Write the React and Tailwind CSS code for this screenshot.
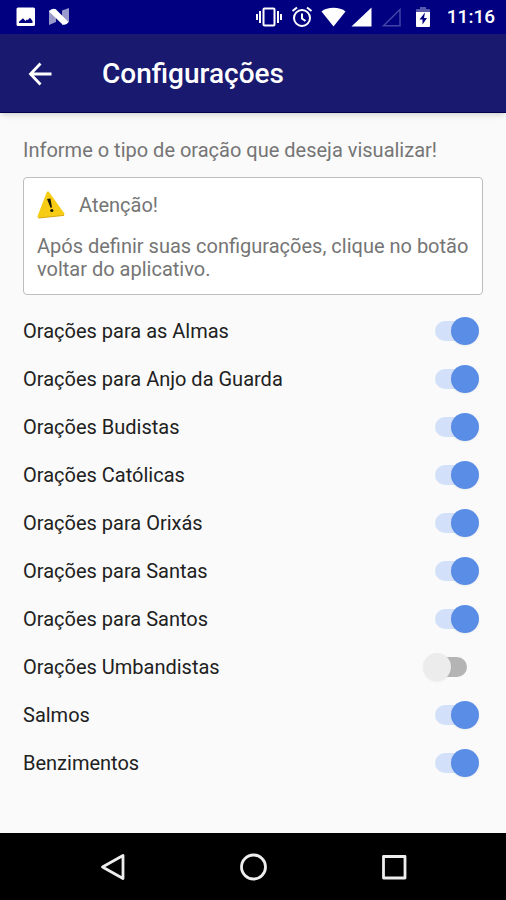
import { useState } from "react";

const prayerTypes = [
  { id: "almas", label: "Orações para as Almas", enabled: true },
  { id: "anjo", label: "Orações para Anjo da Guarda", enabled: true },
  { id: "budistas", label: "Orações Budistas", enabled: true },
  { id: "catolicas", label: "Orações Católicas", enabled: true },
  { id: "orixas", label: "Orações para Orixás", enabled: true },
  { id: "santas", label: "Orações para Santas", enabled: true },
  { id: "santos", label: "Orações para Santos", enabled: true },
  { id: "umbandistas", label: "Orações Umbandistas", enabled: false },
  { id: "salmos", label: "Salmos", enabled: true },
  { id: "benzimentos", label: "Benzimentos", enabled: true },
];

const StatusBar = () => {
  return (
    <div className="flex h-[34px] items-center justify-between bg-[#000080] pr-[11px] pl-4 text-white">
      <div className="flex items-center gap-3">
        <svg className="h-5 w-5" viewBox="0 0 20 20" fill="currentColor">
          <path
            fillRule="evenodd"
            d="M2 .5h15.500a1.500 1.500 0 0 1 1.500 1.500v15.500a1.500 1.500 0 0 1-1.500 1.500H2a1.500 1.500 0 0 1-1.500-1.500V2A1.500 1.500 0 0 1 2 .5zM3 16h13.500v-2L14 10.800l-2.200 2.200-1-.6-1.300 1.600L7 11.200 3 14.800z"
          />
        </svg>
        <svg className="h-5 w-[22px]" viewBox="0 0 22 20" fill="currentColor">
          <path d="M1 3.500l7-1.500v13l-7 3zM14 3.500l7-2.500V15l-7 3z" opacity="0.6" />
          <path d="M1 4.500Q4 .5 8 2.500L20.500 15Q18.500 18.800 14.500 17.500z" />
        </svg>
      </div>
      <div className="flex items-center">
        <svg className="h-5 w-7" viewBox="0 0 28 20" fill="currentColor">
          <rect x="8.500" y="1.500" width="11" height="17" rx="1" fill="none" stroke="currentColor" strokeWidth="2" />
          <path d="M4 4h2v12H4zM1 7h2v6H1zM22 4h2v12h-2zM25 7h2v6h-2z" />
        </svg>
        <svg
          className="ml-2 h-[22px] w-[22px]"
          viewBox="0 0 22 22"
          fill="none"
          stroke="currentColor"
          strokeWidth="2"
        >
          <circle cx="11" cy="12" r="8" />
          <path d="M11 7.500V12.500l3.500 2.500M1.500 5L6 1.500M20.500 5L16 1.500" />
        </svg>
        <svg className="ml-2 h-5 w-[26px]" viewBox="0 0 26 20" fill="currentColor">
          <path d="M12.500 19.500L.5 4.500C6-.5 19-.5 24.500 4.500z" />
        </svg>
        <svg className="ml-1 h-5 w-[22px]" viewBox="0 0 22 20" fill="currentColor">
          <path d="M.5 19.500L20.500 .5v19z" />
        </svg>
        <svg
          className="ml-2 h-5 w-[22px] text-[#4444a8]"
          viewBox="0 0 22 20"
          fill="none"
          stroke="currentColor"
          strokeWidth="1.500"
        >
          <path d="M2.500 18.800L19 2.500v16.300z" />
        </svg>
        <svg className="ml-3 h-[22px] w-4" viewBox="0 0 16 22" fill="currentColor">
          <path d="M1 6V4q0-1 1-1h3V1h6v2h3q1 0 1 1v2z" opacity="0.35" />
          <path
            fillRule="evenodd"
            d="M1 6h14v14q0 1-1 1H2q-1 0-1-1zM10 6.500L4.500 13.500h3V18.500l4.500-6.500H9z"
          />
        </svg>
        <span className="ml-4 text-[19px] leading-6 font-medium">11:16</span>
      </div>
    </div>
  );
};

const Header = () => {
  return (
    <header className="flex h-[79px] items-center border-b border-[#00004c] bg-[#191970] px-6 pt-[2px] text-white shadow-md">
      <button type="button" aria-label="Voltar" className="p-1">
        <svg
          className="h-6 w-6"
          viewBox="0 0 24 24"
          fill="none"
          stroke="currentColor"
          strokeWidth="2.800"
        >
          <path d="M23.500 12H3M12.500 1.500L2.500 12l10 10.500" />
        </svg>
      </button>
      <h1 className="ml-[46px] text-[28px] leading-8 font-medium">Configurações</h1>
    </header>
  );
};

const WarningIcon = () => {
  return (
    <svg className="h-7 w-7" viewBox="0 0 28 28">
      <path
        d="M11 2L26 23 2 25.500z"
        fill="#f6cd14"
        stroke="#f6cd14"
        strokeWidth="3"
        strokeLinejoin="round"
      />
      <path d="M1.500 27L27 24.400" stroke="#d9a90e" strokeWidth="1" />
      <path d="M10 8l3.500-.5 1.500 9-1.500.2z" fill="#1c1800" />
      <circle cx="14.800" cy="19.500" r="1.600" fill="#1c1800" />
    </svg>
  );
};

const NoticeCard = () => {
  return (
    <section className="rounded border border-[#bdbdbd] bg-white p-[13px] text-[#757575]">
      <div className="flex items-center gap-[14px]">
        <WarningIcon />
        <h2>Atenção!</h2>
      </div>
      <p className="mt-4 leading-[23px]">
        Após definir suas configurações, clique no botão voltar do aplicativo.
      </p>
    </section>
  );
};

const SettingRow = ({ item, onToggle }) => {
  return (
    <li className="flex h-12 items-center justify-between">
      <label htmlFor={item.id} className="flex-1">
        {item.label}
      </label>
      <input
        id={item.id}
        type="checkbox"
        role="switch"
        checked={item.enabled}
        onChange={() => onToggle(item.id)}
        className="relative h-7 w-14 cursor-pointer appearance-none before:absolute before:inset-x-3 before:inset-y-1 before:rounded-full before:bg-[#b4b4b4] after:absolute after:top-0 after:left-0 after:h-7 after:w-7 after:rounded-full after:bg-[#ececec] after:shadow-xs checked:before:bg-[#d3e0fa] checked:after:left-7 checked:after:bg-[#5a8de6]"
      />
    </li>
  );
};

const NavigationBar = () => {
  return (
    <nav className="flex h-[67px] items-center justify-center gap-28 bg-black text-[#eeeeee]">
      <button type="button" aria-label="Anterior">
        <svg className="h-7 w-7" viewBox="0 0 28 28" fill="none" stroke="currentColor" strokeWidth="2.800" strokeLinejoin="round">
          <path d="M24 2.500v23L3.500 14z" />
        </svg>
      </button>
      <button type="button" aria-label="Início">
        <svg className="h-7 w-7" viewBox="0 0 28 28" fill="none" stroke="currentColor" strokeWidth="2.800">
          <circle cx="14.500" cy="14" r="12" />
        </svg>
      </button>
      <button type="button" aria-label="Recentes">
        <svg className="h-7 w-7" viewBox="0 0 28 28" fill="none" stroke="currentColor" strokeWidth="2.800" strokeLinejoin="round">
          <path d="M4.500 3.500h21.500v21.500H4.500z" />
        </svg>
      </button>
    </nav>
  );
};

const App = () => {
  const [items, setItems] = useState(prayerTypes);

  const handleToggle = (id) => {
    setItems((prev) =>
      prev.map((item) =>
        item.id === id ? { ...item, enabled: !item.enabled } : item
      )
    );
  };

  return (
    <div className="flex min-h-screen flex-col bg-[#fafafa] font-[Roboto,sans-serif]">
      <StatusBar />
      <Header />
      <main className="flex-1 px-[23px] pt-[25px] text-[20px] leading-6">
        <p className="mb-[15px] text-[#757575]">
          Informe o tipo de oração que deseja visualizar!
        </p>
        <NoticeCard />
        <ul className="mt-3 pr-1 text-[#212121]">
          {items.map((item) => (
            <SettingRow key={item.id} item={item} onToggle={handleToggle} />
          ))}
        </ul>
      </main>
      <NavigationBar />
    </div>
  );
};

export default App;
